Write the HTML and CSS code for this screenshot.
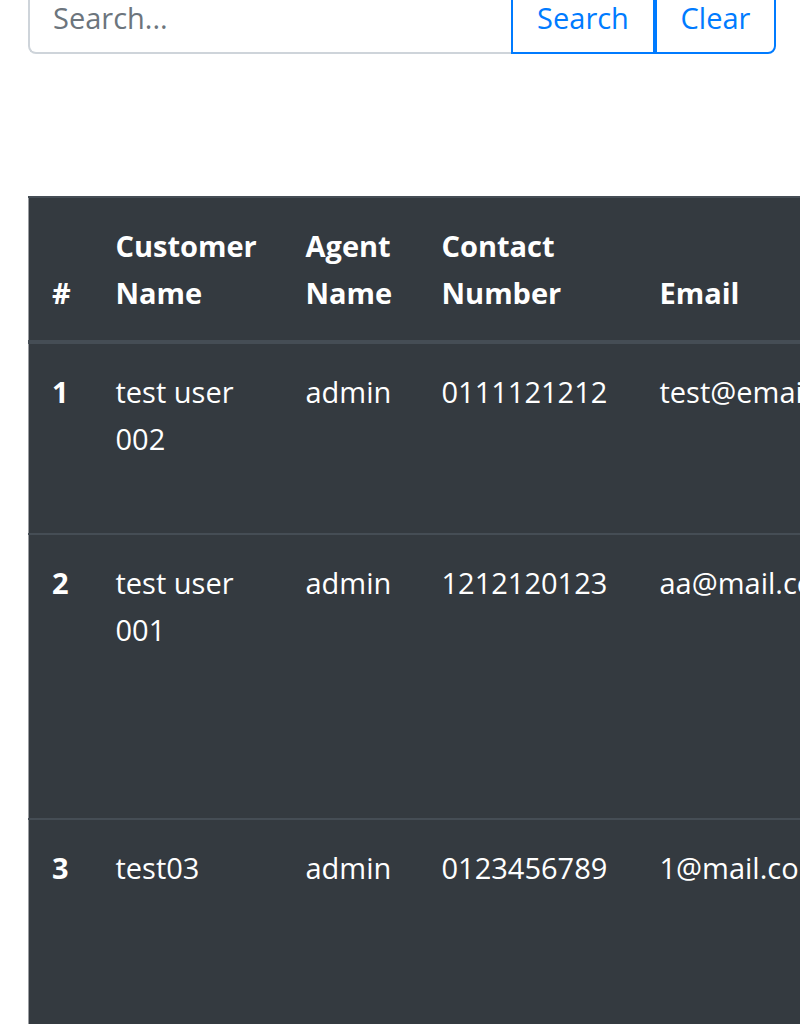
FILE: index.html
```html
<!DOCTYPE html>
<html lang="en">
<head>
<meta charset="utf-8">
<title>Customers</title>
<link rel="stylesheet" href="styles.css">
</head>
<body>
<div class="page">
  <form class="search-group">
    <input class="search-input" type="text" placeholder="Search...">
    <button type="button" class="btn btn-mid">Search</button>
    <button type="button" class="btn btn-end">Clear</button>
  </form>

  <table class="table-dark">
    <colgroup>
      <col class="c-num"><col class="c-name"><col class="c-agent"><col class="c-contact"><col class="c-email"><col class="c-rest">
    </colgroup>
    <thead>
      <tr>
        <th>#</th>
        <th>Customer Name</th>
        <th>Agent Name</th>
        <th>Contact Number</th>
        <th>Email</th>
        <th>Address</th>
      </tr>
    </thead>
    <tbody>
      <tr class="row-3">
        <th>1</th>
        <td>test user 002</td>
        <td>admin</td>
        <td>0111121212</td>
        <td>test@email.com</td>
        <td></td>
      </tr>
      <tr class="row-5">
        <th>2</th>
        <td>test user 001</td>
        <td>admin</td>
        <td>1212120123</td>
        <td>aa@mail.com</td>
        <td></td>
      </tr>
      <tr class="row-5">
        <th>3</th>
        <td>test03</td>
        <td>admin</td>
        <td>0123456789</td>
        <td>1@mail.com</td>
        <td></td>
      </tr>
    </tbody>
  </table>
</div>
</body>
</html>
```

FILE: styles.css
```css
html, body {
  margin: 0;
  padding: 0;
  background: #fff;
}

body {
  font-family: "Open Sans", "Noto Sans", sans-serif;
  font-size: 29px;
  line-height: 47px;
  color: #212529;
}

.page {
  width: 800px;
  height: 1024px;
  overflow: hidden;
  padding-left: 28px;
  box-sizing: border-box;
}

.search-group {
  display: flex;
  width: 748px;
  height: 74px;
  margin: -20px 0 0 0;
}

.search-input {
  flex: 1;
  min-width: 0;
  box-sizing: border-box;
  height: 74px;
  margin: 0;
  padding: 0 23px 0 23px;
  border: 2px solid #ced4da;
  border-right: none;
  border-radius: 8px 0 0 8px;
  font: inherit;
  color: #495057;
  background: #fff;
  outline: none;
}

.search-input::placeholder {
  color: #6c757d;
  opacity: 1;
}

.btn {
  box-sizing: border-box;
  height: 74px;
  margin: 0;
  padding: 0 23px;
  border: 2px solid #007bff;
  background: transparent;
  color: #007bff;
  font: inherit;
  cursor: pointer;
}

.btn-mid {
  width: 144px;
  border-radius: 0;
}

.btn-end {
  width: 121px;
  border-radius: 0 8px 8px 0;
  margin-left: 0;
}

.table-dark {
  margin-top: 142px;
  border-collapse: collapse;
  table-layout: fixed;
  width: 1300px;
  background: #343a40;
  color: #fff;
  border-left: 1px solid #9a9da1;
}

.c-num { width: 64px; }
.c-name { width: 190px; }
.c-agent { width: 136px; }
.c-contact { width: 218px; }
.c-email { width: 300px; }
.c-rest { width: 392px; }

.table-dark th,
.table-dark td {
  padding: 24px 23px;
  text-align: left;
  vertical-align: top;
  border-top: 2px solid #454d55;
}

.table-dark thead th {
  vertical-align: bottom;
  border-bottom: 4px solid #454d55;
  font-weight: 700;
}

.table-dark tbody th {
  font-weight: 700;
}

.table-dark td {
  font-weight: 400;
}

.row-3 { height: 192px; }
.row-5 { height: 285px; }
```
